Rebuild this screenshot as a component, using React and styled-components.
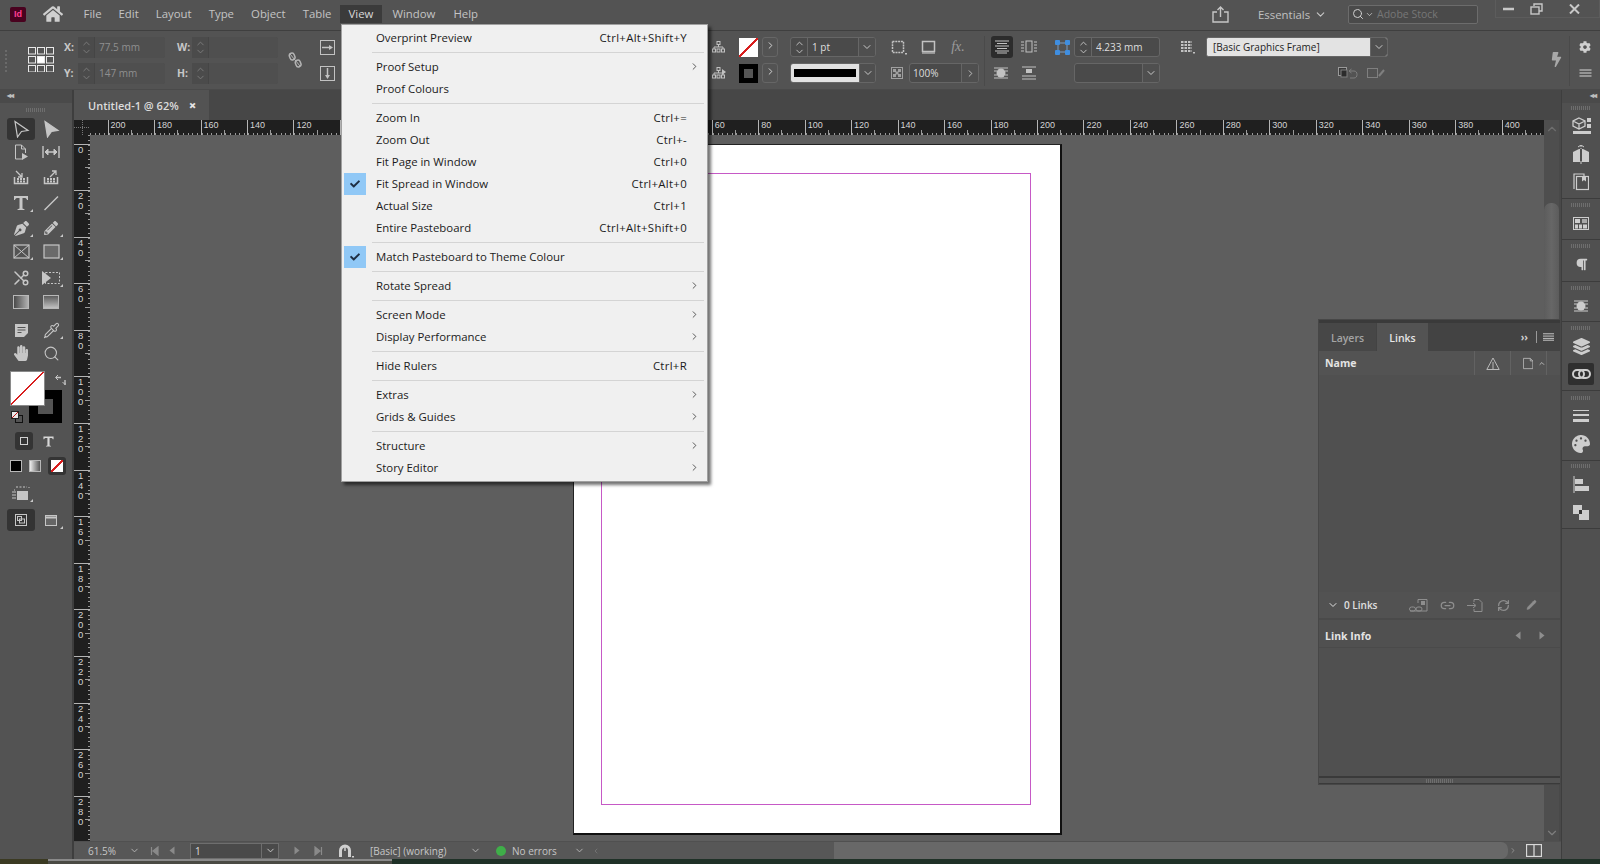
import React from "react";
import styled, { createGlobalStyle } from "styled-components";
import {
  FaHome, FaPenNib, FaPencilAlt, FaHandPaper, FaPalette, FaParagraph, FaCog,
  FaLayerGroup, FaBolt, FaCheck,
} from "react-icons/fa";
import { Pipette, Search, Scissors, ChevronDown, ChevronRight, ChevronUp, Link2, RefreshCw, Pencil } from "lucide-react";

const Global = createGlobalStyle`
  html, body { margin: 0; padding: 0; background: #535353; overflow: hidden; }
  #root { width: 1600px; height: 864px; }
  * { box-sizing: border-box; }
  body { font-family: "Open Sans", "Liberation Sans", sans-serif; }
`;

const SV = ({ w = 16, h = 16, vb = "0 0 16 16", children }) => (
  <svg width={w} height={h} viewBox={vb} fill="none" stroke="currentColor" strokeWidth="1">
    {children}
  </svg>
);

const RefGrid = () => (
  <SV w={26} h={25} vb="0 0 26 25">
    {[0, 9, 18].map((y) =>
      [0, 9, 18].map((x) => (
        <rect key={x + "-" + y} x={x + 0.5} y={y + 0.5} width="7" height="6.5" fill={x === 9 && y === 9 ? "#fff" : "none"} />
      ))
    )}
  </SV>
);
const Arrow = ({ solid }) => (
  <SV w={18} h={18} vb="0 0 18 18">
    <path d="M3 1.5 L16 10.5 L9.5 11.5 L5.5 17 Z" fill={solid ? "currentColor" : "none"} strokeWidth="1.2" />
  </SV>
);
const PageTool = () => (
  <SV>
    <path d="M2.5 1v14h7M2.5 1h6l4 4v4M8.5 1v4h4" />
    <path d="M9 9l6 3.5L9 16z" fill="currentColor" stroke="none" />
  </SV>
);
const GapTool = () => (
  <SV w={18} vb="0 0 18 16">
    <path d="M1 2v12M17 2v12M3 8h12" strokeWidth="1.4" />
    <path d="M3 8l3-3v6zM15 8l-3-3v6z" fill="currentColor" />
  </SV>
);
const Collector = ({ up }) => (
  <SV>
    <path d="M1.5 8v6.5h13V8" strokeWidth="1.5" />
    <path d="M4 10h8M4 12.5h8" stroke="currentColor" strokeWidth="2" strokeDasharray="2 1" />
    <path d={up ? "M7 8l6-6M9 2h4v4" : "M9 8L3 2M5 8h4V4"} strokeWidth="1.3" />
  </SV>
);
const TypeT = ({ s = 18 }) => (
  <SV w={s} h={s} vb="0 0 18 18">
    <path d="M2 2h14v4h-1c-.4-1.5-1-2-3-2h-1.500v10.500l2 .7V16H5.500v-.8l2-.7V4H6c-2 0-2.600.5-3 2H2z" fill="currentColor" stroke="none" />
  </SV>
);
const LineTool = () => (
  <SV><path d="M1.5 15L15 1.5" strokeWidth="1.5" /></SV>
);
const FrameX = () => (
  <SV w={17} h={15} vb="0 0 17 15">
    <rect x="1" y="1" width="15" height="13" strokeWidth="1.2" />
    <path d="M1 1l15 13M16 1L1 14" />
  </SV>
);
const RectTool = () => (
  <SV w={17} h={15} vb="0 0 17 15">
    <rect x="1" y="1" width="15" height="13" fill="#6a6a6a" strokeWidth="1.2" />
  </SV>
);
const FreeTransform = () => (
  <SV w={20} h={16} vb="0 0 20 16">
    <rect x="4.5" y="2.5" width="14" height="11" strokeDasharray="2 1.5" />
    <path d="M1 1l9 7-9 7z" fill="currentColor" stroke="none" />
  </SV>
);
const NoteTool = () => (
  <SV w={15} h={15} vb="0 0 15 15">
    <path d="M1 1h13v9l-4 4H1z" fill="currentColor" stroke="none" />
    <path d="M3.5 4.500h8M3.500 7h8M3.500 9.500h4" stroke="#535353" />
  </SV>
);
const SwapIcon = () => (
  <SV w={11} h={12} vb="0 0 11 12">
    <path d="M1 3.500h5M10 11V6" strokeWidth="1.4" />
    <path d="M3 1L.5 3.500 3 6M7.500 8L10 10.500 12.500 8" />
  </SV>
);
const SmallDefault = () => (
  <SV w={12} h={12} vb="0 0 12 12">
    <rect x="4.5" y="4.5" width="7" height="7" fill="none" stroke="#111" />
    <rect x=".5" y=".5" width="7" height="7" fill="#e8e8e8" stroke="#222" />
    <path d="M1 7l6-6" stroke="#c01818" />
  </SV>
);
const ModePreview = () => (
  <SV w={20} h={15} vb="0 0 20 15">
    <path d="M5 1h11M3 4h1M18 1v1" strokeDasharray="2 1.5" />
    <rect x="6" y="5" width="11" height="9" fill="currentColor" stroke="none" />
    <path d="M1 6h4M1 9h4M1 12h4" />
  </SV>
);
const NormalMode = () => (
  <SV w={12} h={12} vb="0 0 12 12">
    <rect x=".5" y=".5" width="11" height="11" />
    <rect x="2.5" y="2.5" width="4" height="4" />
    <rect x="4.5" y="5" width="5" height="4" />
  </SV>
);
const ScreenMode = () => (
  <SV w={12} h={11} vb="0 0 12 11">
    <rect x=".5" y=".5" width="11" height="10" fill="#666" />
    <path d="M.5 2.500h11" strokeWidth="2" />
  </SV>
);
const BrokenLink = () => (
  <SV w={14} h={16} vb="0 0 14 16">
    <rect x="1.5" y="1" width="5" height="7" rx="2.5" strokeWidth="1.5" transform="rotate(-20 4 4)" />
    <rect x="7.5" y="8" width="5" height="7" rx="2.5" strokeWidth="1.5" transform="rotate(-20 10 11)" />
    <path d="M2 2l10 12" />
  </SV>
);
const SpreadH = () => (
  <SV w={15} h={15} vb="0 0 15 15">
    <rect x=".5" y=".5" width="14" height="14" />
    <path d="M2 7.500h9" strokeWidth="1.5" />
    <path d="M9 5l4 2.500L9 10z" fill="currentColor" stroke="none" />
  </SV>
);
const SpreadV = () => (
  <SV w={15} h={15} vb="0 0 15 15">
    <rect x=".5" y=".5" width="14" height="14" />
    <path d="M7.500 2v9" strokeWidth="1.5" />
    <path d="M5 9l2.500 4L10 9z" fill="currentColor" stroke="none" />
  </SV>
);
const OrgChart = ({ arrow }) => (
  <SV w={14} h={12} vb="0 0 14 12">
    <rect x="5" y=".5" width="3" height="3" />
    <path d="M6.500 3.500V6M2 8V6h9v2" />
    <rect x=".5" y="8" width="3" height="3" />
    <rect x="5" y="8" width="3" height="3" />
    <rect x="9.5" y="8" width="3" height="3" />
    {arrow && <path d="M10 2l4 3-4 3z" fill="currentColor" stroke="none" />}
  </SV>
);
const StrokeBox = () => (
  <SV w={16} h={15} vb="0 0 16 15">
    <rect x="1.5" y="1.5" width="11" height="11" strokeDasharray="2 .8" strokeWidth="1.5" />
    <rect x="14" y="13" width="2" height="1.5" fill="currentColor" stroke="none" />
  </SV>
);
const ShadowBox = () => (
  <SV w={15} h={15} vb="0 0 15 15">
    <rect x="1.5" y="1.5" width="12" height="10" strokeWidth="1.5" />
    <rect x="1" y="12" width="13" height="2" fill="currentColor" stroke="none" opacity=".6" />
  </SV>
);
const Opacity = () => (
  <SV w={12} h={12} vb="0 0 12 12">
    <rect x=".5" y=".5" width="11" height="11" opacity=".7" />
    <rect x="2" y="2" width="3" height="3" fill="currentColor" stroke="none" opacity=".7" />
    <rect x="7" y="2" width="3" height="3" fill="currentColor" stroke="none" opacity=".7" />
    <rect x="4.5" y="4.5" width="3" height="3" fill="currentColor" stroke="none" opacity=".7" />
    <rect x="2" y="7" width="3" height="3" fill="currentColor" stroke="none" opacity=".7" />
    <rect x="7" y="7" width="3" height="3" fill="currentColor" stroke="none" opacity=".7" />
  </SV>
);
const AlignLines = ({ v = 0 }) => (
  <SV w={16} h={14} vb="0 0 16 14">
    {v === 0 && <path d="M1 1h14M3 3.500h10M1 6h14M3 8.500h10M1 11h14M3 13h10" strokeWidth="1.1" />}
    {v === 1 && (
      <>
        <rect x="5" y="1" width="6" height="11" />
        <path d="M0 2h3M0 5h3M0 8h3M0 11h3M13 2h3M13 5h3M13 8h3M13 11h3" />
      </>
    )}
    {v === 2 && (
      <>
        <circle cx="8" cy="7" r="4.5" fill="currentColor" stroke="none" />
        <path d="M1 2h14M1 5h3M12 5h3M1 9h3M12 9h3M1 12h14" />
      </>
    )}
    {v === 3 && (
      <>
        <rect x="5" y="3" width="6" height="4" fill="currentColor" stroke="none" />
        <path d="M1 1h14M1 10h14M1 13h14" />
      </>
    )}
  </SV>
);
const BlueCorners = () => (
  <SV w={15} h={15} vb="0 0 15 15">
    <path d="M3 3h9v9H3z" stroke="#7d9cc0" />
    {[[0, 0], [10, 0], [0, 10], [10, 10]].map(([x, y]) => (
      <rect key={x + "" + y} x={x} y={y} width="5" height="5" rx="1" fill="#3f8ee0" stroke="none" />
    ))}
  </SV>
);
const ObjStyles = () => (
  <SV w={15} h={15} vb="0 0 15 15">
    <path d="M1 2h11M1 5h11M1 8h11M1 11h11" strokeWidth="2" strokeDasharray="2.5 1" />
    <rect x="13" y="12" width="2" height="1.5" fill="currentColor" stroke="none" />
  </SV>
);
const ClearOverride = () => (
  <SV w={20} h={13} vb="0 0 20 13">
    <rect x=".5" y=".5" width="8" height="8" fill="#3a3a3a" stroke="#9a9a9a" />
    <rect x="3" y="3" width="6" height="7" fill="#2c2c2c" />
    <path d="M12 4h4c2 0 3 1.500 3 3.500S18 11 16 11h-4M13.500 2L11 4l2.500 2" />
  </SV>
);
const FrameFit = () => (
  <SV w={18} h={12} vb="0 0 18 12">
    <rect x=".5" y="1.5" width="10" height="9" />
    <path d="M12 9l5-6" strokeWidth="2" />
  </SV>
);
const ShareIcon = () => (
  <SV w={17} h={17} vb="0 0 17 17">
    <path d="M5 6H1v10h15V6h-4" strokeWidth="1.4" />
    <path d="M8.500 11V1M5.500 4l3-3 3 3" strokeWidth="1.4" />
  </SV>
);
const MinIcon = () => (
  <SV w={11} h={4} vb="0 0 11 4"><path d="M0 2h11" strokeWidth="2.5" /></SV>
);
const Restore = () => (
  <SV w={13} h={12} vb="0 0 13 12">
    <path d="M4 3V1h8v7h-3" strokeWidth="1.4" />
    <rect x="1" y="4" width="8" height="7" strokeWidth="1.4" />
  </SV>
);
const CloseIcon = () => (
  <SV w={11} h={10} vb="0 0 11 10"><path d="M1 .5l9 9M10 .5l-9 9" strokeWidth="2" /></SV>
);
const Warn = () => (
  <SV w={14} h={13} vb="0 0 14 13">
    <path d="M7 1L.8 12.500h12.400zM7 5v7" />
  </SV>
);
const DocIcon = () => (
  <SV w={12} h={13} vb="0 0 12 13">
    <path d="M.5.5h8l3 3v9H.5zM8.500.5v3h3" />
  </SV>
);
const Hamburger = ({ w = 12, n = 4 }) => (
  <SV w={w} h={8} vb="0 0 12 8">
    <path d={n === 4 ? "M0 .5h12M0 3h12M0 5.500h12M0 7.500h12" : "M0 1h12M0 4h12M0 7h12"} />
  </SV>
);
const FooterRelink = () => (
  <SV w={19} h={13} vb="0 0 19 13">
    <path d="M9 4V.5h9v11.500H1" />
    <rect x="12" y="2" width="4" height="4" fill="currentColor" stroke="none" />
    <rect x=".5" y="8" width="6" height="4" rx="2" />
    <rect x="7" y="8" width="6" height="4" rx="2" />
  </SV>
);
const GoTo = () => (
  <SV w={16} h={13} vb="0 0 16 13">
    <path d="M7 3V.5h5l3 3v9H7V10" />
    <path d="M0 6.500h8M6 4l3 2.500L6 9" />
  </SV>
);
const FirstLast = ({ last }) => (
  <SV w={9} h={10} vb="0 0 9 10">
    {last ? <path d="M1 1l5 4-5 4zM7.500 1v8" fill="currentColor" strokeWidth="1.2" /> : <path d="M8 1L3 5l5 4zM1.500 1v8" fill="currentColor" strokeWidth="1.2" />}
  </SV>
);
const Tri = ({ dir }) => (
  <SV w={6} h={9} vb="0 0 6 9">
    <path d={dir === "l" ? "M5.500.5v8L.5 4.500z" : "M.5.5v8l5-4z"} fill="currentColor" stroke="none" />
  </SV>
);
const Preflight = () => (
  <SV w={16} h={14} vb="0 0 16 14">
    <path d="M2.500 13V6.500a4.500 4.500 0 0 1 9 0V13" strokeWidth="3" />
    <path d="M7 3v4" strokeWidth="1.5" />
    <rect x="14" y="12" width="2" height="1.5" fill="currentColor" stroke="none" />
  </SV>
);
const SplitView = () => (
  <SV w={16} h={13} vb="0 0 16 13">
    <rect x=".5" y=".5" width="15" height="12" strokeWidth="1.3" />
    <path d="M8 .5v12" strokeWidth="1.3" />
  </SV>
);
const CC3D = () => (
  <SV w={19} h={18} vb="0 0 19 18">
    <path d="M7 1l6 3v5l-6 3-6-3V4zM1 4l6 3 6-3M7 7v5" strokeWidth="1.3" />
    <rect x="15" y="1" width="4" height="4" fill="currentColor" stroke="none" />
    <rect x="15" y="7" width="4" height="4" fill="currentColor" stroke="none" />
    <rect x="1" y="14" width="18" height="3" fill="currentColor" stroke="none" />
  </SV>
);
const BookPages = () => (
  <SV w={18} h={19} vb="0 0 18 19">
    <path d="M9 3L1 7v10h7V3zM9 3l8 4v10h-7V3z" fill="currentColor" stroke="none" />
    <path d="M9 0v2M6 2l3-2 3 2M9 16v3" />
  </SV>
);
const LayersPages = () => (
  <SV w={16} h={18} vb="0 0 16 18">
    <path d="M1 16V1h10v2" strokeWidth="1.2" />
    <rect x="3.5" y="3.5" width="12" height="13" strokeWidth="1.2" />
    <path d="M9 3.500h4v5l-2-1.500-2 1.500z" fill="currentColor" stroke="none" />
  </SV>
);
const GridPanel = () => (
  <SV w={16} h={13} vb="0 0 16 13">
    <rect x=".5" y=".5" width="15" height="12" />
    <rect x="2" y="2" width="5" height="4" fill="currentColor" stroke="none" />
    <rect x="9" y="2" width="5" height="4" fill="currentColor" stroke="none" opacity=".7" />
    <rect x="2" y="7.5" width="3" height="4" fill="currentColor" stroke="none" />
    <rect x="6" y="7.5" width="3" height="4" fill="currentColor" stroke="none" />
    <rect x="10" y="7.5" width="4" height="4" fill="currentColor" stroke="none" />
  </SV>
);
const Strokes = () => (
  <SV w={18} h={14} vb="0 0 18 14">
    <path d="M1 1.500h16" />
    <path d="M1 6h16" strokeWidth="2" />
    <path d="M1 11.500h16" strokeWidth="3" />
  </SV>
);
const Align = () => (
  <SV w={16} h={17} vb="0 0 16 17">
    <path d="M1 0v17" />
    <rect x="2" y="3" width="8" height="5" fill="currentColor" stroke="none" />
    <rect x="2" y="10" width="14" height="5" fill="currentColor" stroke="none" />
  </SV>
);
const Pathfinder = () => (
  <SV w={16} h={15} vb="0 0 16 15">
    <rect x="0" y="0" width="9" height="9" fill="currentColor" stroke="none" />
    <rect x="6" y="5" width="10" height="10" fill="currentColor" stroke="none" />
    <rect x="6" y="5" width="3" height="4" fill="#333" stroke="none" />
  </SV>
);
const ChainIcon = () => (
  <SV w={19} h={10} vb="0 0 19 10">
    <rect x="1" y="1" width="11" height="8" rx="4" strokeWidth="2" />
    <rect x="7" y="1" width="11" height="8" rx="4" strokeWidth="2" />
  </SV>
);

const App = styled.div`
  position: relative;
  width: 1600px;
  height: 864px;
  display: flex;
  flex-direction: column;
  background: #535353;
  overflow: hidden;
  font-size: 11px;
  color: #c8c8c8;
`;

const MenuBar = styled.div`
  height: 31px;
  flex: none;
  display: flex;
  align-items: center;
  padding: 0 0 2px 10px;
  border-bottom: 1px solid #3f3f3f;
`;
const IdLogo = styled.div`
  width: 16px;
  height: 15px;
  background: #49021f;
  border-radius: 2px;
  color: #ff3f94;
  font: 700 9px/15px "Liberation Sans", sans-serif;
  text-align: center;
`;
const HomeBtn = styled.div`
  margin: 0 12px 0 17px;
  color: #cfcfcf;
  display: flex;
`;
const MenuItem = styled.div`
  padding: 0 8.5px;
  margin-left: ${(p) => p.$ml || 0}px;
  height: 18px;
  line-height: 18px;
  font-size: 11.4px;
  color: ${(p) => (p.$open ? "#d8d8d8" : "#c4c4c4")};
  background: ${(p) => (p.$open ? "#3b3b3b" : "transparent")};
`;
const Share = styled.div`
  margin-left: auto;
  display: flex;
  color: #c6c6c6;
  padding-right: 29px;
`;
const Workspace = styled.div`
  font-size: 11.4px;
  color: #c0c0c0;
  width: 50px;
`;
const WsChevron = styled.div`
  display: flex;
  width: 34px;
  margin-left: 6px;
  color: #c8c8c8;
`;
const StockSearch = styled.div`
  width: 130px;
  height: 19px;
  border: 1px solid #6c6c6c;
  border-radius: 2px;
  background: #4a4a4a;
  display: flex;
  align-items: center;
  gap: 1px;
  padding-left: 3px;
  color: #cfcfcf;
  font-size: 10.5px;
  margin-right: 17px;
  span { color: #777; margin-left: 2px; }
`;
const WinButtons = styled.div`
  width: 105px;
  height: 18px;
  align-self: flex-start;
  display: grid;
  grid-template-columns: 24px 32px 44px;
  place-items: center;
  color: #c8c8c8;
  border: 1px solid #5c5c5c;
  border-top: none;
`;

const ControlBar = styled.div`
  height: 59px;
  flex: none;
  display: flex;
  padding-top: 6px;
  position: relative;
  border-bottom: 1px solid #4a4a4a;
`;
const Col = styled.div`
  flex: none;
  width: ${(p) => p.$w}px;
  margin-left: ${(p) => p.$ml || 0}px;
  display: flex;
  flex-direction: column;
  gap: 6px;
`;
const Row = styled.div`
  height: ${(p) => p.$h || 20}px;
  display: flex;
  align-items: center;
  justify-content: ${(p) => p.$j || "flex-start"};
  gap: ${(p) => p.$gap || 0}px;
  padding-right: ${(p) => p.$pr || 0}px;
  color: ${(p) => p.$c || "#c2c2c2"};
`;
const BarGrip = styled.div`
  width: 2px;
  margin: 13px 0 0 5px;
  height: 22px;
  border-left: 2px dotted #6a6a6a;
`;
const RefBox = styled.div`
  margin: 10px 0 0 21px;
  color: #e8e8e8;
`;
const AxisLabel = styled.div`
  font-weight: 700;
  font-size: 10.5px;
  color: #c8c8c8;
`;
const DimField = styled.div`
  width: 100%;
  height: 21px;
  display: flex;
  align-items: center;
  background: #4f4f4f;
  border-radius: 2px;
  color: #8f8f8f;
  font-size: 10px;
`;
const Spin = styled.div`
  width: 17px;
  height: 100%;
  flex: none;
  display: flex;
  flex-direction: column;
  align-items: center;
  justify-content: center;
  background: ${(p) => p.$bg || "transparent"};
  border-right: 1px solid ${(p) => p.$line || "#454545"};
  color: ${(p) => p.$c || "#7d7d7d"};
  margin-right: 4px;
  svg { margin: -1.5px 0; }
`;
const BoxField = styled.div`
  width: ${(p) => p.$w}px;
  height: 20px;
  flex: none;
  display: flex;
  align-items: center;
  border: 1px solid #666;
  border-radius: 3px;
  background: ${(p) => p.$bg || "#4a4a4a"};
  font-size: 10px;
  color: #dedede;
  overflow: hidden;
`;
const Val = styled.div`
  flex: 1;
  padding-left: ${(p) => p.$pl || 0}px;
  white-space: nowrap;
`;
const Drop = styled.div`
  width: 17px;
  height: 100%;
  flex: none;
  display: flex;
  align-items: center;
  justify-content: center;
  border-left: 1px solid #666;
  background: #4f4f4f;
  color: #c8c8c8;
`;
const NoneSwatch = styled.div`
  width: 19px;
  height: 19px;
  background: linear-gradient(to bottom right, #fff 47%, #d81e1e 47% 55%, #fff 55%);
`;
const StrokeSwatch = styled.div`
  width: 19px;
  height: 19px;
  background: #000;
  display: flex;
  align-items: center;
  justify-content: center;
  &::after { content: ""; width: 9px; height: 9px; background: #555; }
`;
const StrokePreview = styled.div`
  width: 68px;
  height: 100%;
  flex: none;
  background: #e2e2e2;
  display: flex;
  align-items: center;
  padding: 0 3px;
  &::after { content: ""; flex: 1; height: 8px; background: #000; }
`;
const PressedBtn = styled.div`
  width: 22px;
  height: 22px;
  margin: -2px 0;
  flex: none;
  background: #2c2c2c;
  border-radius: 3px;
  display: flex;
  align-items: center;
  justify-content: center;
`;
const VLine = styled.div`
  width: 1px;
  height: 50px;
  margin: -1px 0 0 ${(p) => p.$ml}px;
  background: #4a4a4a;
  flex: none;
`;
const PlainIcon = styled.div`
  width: ${(p) => p.$w}px;
  display: flex;
  justify-content: center;
  flex: none;
`;
const FrameInput = styled.div`
  flex: 1;
  height: 100%;
  background: #e3e3e3;
  color: #222;
  font-size: 10px;
  line-height: 18px;
  padding-left: 6px;
`;
const Fx = styled.span`
  font: italic 14px "Liberation Serif", serif;
  color: #9b9b9b;
`;
const BoltUp = styled.div`
  display: flex;
  margin-top: -28px;
`;

const Body = styled.div`
  flex: 1;
  display: flex;
  min-height: 0;
`;

const ToolBar = styled.div`
  width: 72px;
  flex: none;
  display: flex;
  flex-direction: column;
`;
const Collapse = styled.div`
  height: 13px;
  flex: none;
  background: #4a4a4a;
  color: #bdbdbd;
  font: 700 8px/12px "Liberation Sans", sans-serif;
  letter-spacing: -1px;
  padding: 0 ${(p) => (p.$right ? "4px" : 0)} 0 ${(p) => (p.$right ? 0 : "7px")};
  text-align: ${(p) => (p.$right ? "right" : "left")};
`;
const Grip = styled.div`
  height: 4px;
  width: ${(p) => p.$w || 20}px;
  margin: ${(p) => p.$mt ?? 5}px auto 0;
  background: repeating-linear-gradient(to right, #6e6e6e 0 1px, transparent 1px 2px);
  flex: none;
`;
const ToolSpacer = styled.div`
  height: 6px;
  flex: none;
`;
const ToolRow = styled.div`
  display: flex;
  gap: 2px;
  padding-left: 7px;
  margin-top: ${(p) => p.$mt}px;
`;
const Tool = styled.div`
  position: relative;
  width: 28px;
  height: 22px;
  display: flex;
  align-items: center;
  justify-content: center;
  color: #c6c6c6;
  border-radius: 3px;
  background: ${(p) => (p.$active ? "#343434" : "transparent")};
  ${(p) =>
    p.$corner &&
    `&::after {
      content: "";
      position: absolute;
      right: 2px;
      bottom: 2px;
      border-left: 3px solid transparent;
      border-bottom: 3px solid #c8c8c8;
    }`}
`;
const FlipX = styled.div`
  display: flex;
  transform: scaleX(-1);
`;
const GradBox = styled.div`
  width: 16px;
  height: 14px;
  border: 1px solid #b8b8b8;
  background: linear-gradient(to right, #4a4a4a, #b0b0b0);
`;
const FeatherBox = styled.div`
  width: 16px;
  height: 14px;
  border: 1px solid #b8b8b8;
  background: linear-gradient(to bottom, #5d5d5d, #c0c0c0);
`;
const FillStroke = styled.div`
  position: relative;
  height: 54px;
  flex: none;
  margin-top: 7px;
`;
const BigFill = styled.div`
  position: absolute;
  left: 10px;
  top: 0;
  width: 35px;
  height: 35px;
  z-index: 1;
  background: linear-gradient(to bottom right, #fff 48%, #d81e1e 48% 51%, #fff 51%);
  border: 1px solid #8a8a8a;
`;
const BigStroke = styled.div`
  position: absolute;
  left: 29px;
  top: 19px;
  width: 33px;
  height: 33px;
  border: 9px solid #000;
  background: #535353;
`;
const SwapPos = styled.div`
  position: absolute;
  left: 55px;
  top: 3px;
  color: #c4c4c4;
  display: flex;
`;
const DefaultPos = styled.div`
  position: absolute;
  left: 11px;
  top: 40px;
  display: flex;
`;
const FormatRow = styled.div`
  display: flex;
  align-items: center;
  margin: ${(p) => p.$mt}px 0 0 ${(p) => p.$ml}px;
  gap: ${(p) => p.$gap}px;
`;
const SmallBtn = styled.div`
  width: 18px;
  height: 18px;
  display: flex;
  align-items: center;
  justify-content: center;
  color: #d8d8d8;
  border-radius: 3px;
  background: ${(p) => (p.$active ? "#343434" : "transparent")};
`;
const Outline = styled.div`
  width: 8px;
  height: 8px;
  border: 1px solid #d0d0d0;
`;
const ApplySwatch = styled.div`
  width: 12px;
  height: 12px;
  border: 1px solid #b8b8b8;
  background: ${(p) => p.$bg};
`;
const NoneSwatchSmall = styled.div`
  width: 12px;
  height: 12px;
  background: linear-gradient(to bottom right, #fff 44%, #d81e1e 44% 56%, #fff 56%);
`;

const DocArea = styled.div`
  flex: 1;
  min-width: 0;
  display: flex;
  flex-direction: column;
  border-left: 2px solid #3e3e3e;
`;
const TabRow = styled.div`
  height: 30px;
  flex: none;
  background: #474747;
`;
const DocTab = styled.div`
  width: 135px;
  height: 100%;
  background: #535353;
  display: flex;
  align-items: center;
  padding: 0 0 0 14px;
  gap: 10px;
  font-size: 11px;
  font-weight: 600;
  color: #dcdcdc;
  b { font-size: 13px; color: #e4e4e4; }
`;
const DocMid = styled.div`
  flex: 1;
  display: flex;
  min-height: 0;
`;
const DocLeft = styled.div`
  flex: 1;
  min-width: 0;
  display: flex;
  flex-direction: column;
`;
const HRulerRow = styled.div`
  height: 15px;
  flex: none;
  display: flex;
  background: #1f1f1f;
`;
const RulerCorner = styled.div`
  width: 16px;
  flex: none;
  background:
    repeating-linear-gradient(to right, #777 0 1px, transparent 1px 2px) 0 7px / 100% 1px no-repeat,
    repeating-linear-gradient(to bottom, #777 0 1px, transparent 1px 2px) 8px 0 / 1px 100% no-repeat,
    #1f1f1f;
`;
const HRuler = styled.div`
  flex: 1;
  min-width: 0;
  display: flex;
  overflow: hidden;
`;
const HSeg = styled.div`
  flex: none;
  width: ${(p) => p.$w}px;
  height: 15px;
  border-left: ${(p) => (p.$lead ? "none" : "1px solid #b4b4b4")};
  padding-left: 2px;
  font: 9px/11px "Liberation Sans", sans-serif;
  color: #d4d4d4;
  background:
    repeating-linear-gradient(to right, #9a9a9a 0 1px, transparent 1px 4.647px) 0 100% / 100% 2px no-repeat,
    linear-gradient(#9a9a9a, #9a9a9a) 22.2px 100% / 1px 5px no-repeat;
`;
const CanvasRow = styled.div`
  flex: 1;
  min-height: 0;
  display: flex;
`;
const VRuler = styled.div`
  width: 16px;
  flex: none;
  background: #1f1f1f;
  overflow: hidden;
`;
const VSeg = styled.div`
  width: 100%;
  height: ${(p) => p.$h}px;
  border-top: ${(p) => (p.$lead ? "none" : "1px solid #b4b4b4")};
  padding: 0 0 0 4px;
  font: 9.5px/10px "Liberation Sans", sans-serif;
  color: #d4d4d4;
  background:
    repeating-linear-gradient(to bottom, #9a9a9a 0 1px, transparent 1px 4.66px) 100% 0 / 2px 100% no-repeat,
    linear-gradient(#9a9a9a, #9a9a9a) 100% 22.3px / 5px 1px no-repeat;
`;
const Pasteboard = styled.div`
  flex: 1;
  min-width: 0;
  background: #5e5e5e;
  padding: 9px 0 0 482.6px;
`;
const Page = styled.div`
  width: 489px;
  height: 691px;
  background: #fff;
  border: 1px solid #222;
  border-right: 2px solid #111;
  border-bottom: 2px solid #111;
  padding: 28px 29px 28px 27px;
`;
const Guide = styled.div`
  height: 100%;
  border: 1px solid #c659c6;
`;
const VScroll = styled.div`
  width: 17px;
  flex: none;
  background: #4e4e4e;
  display: flex;
  flex-direction: column;
  padding-top: 2px;
  color: #6e6e6e;
  border-right: 2px solid #494949;
  align-items: center;
`;
const VThumb = styled.div`
  width: 15px;
  height: 500px;
  margin-top: 67px;
  border-radius: 7px 7px 0 0;
  background: linear-gradient(to right, #5c5c5c, #676767 50%, #5c5c5c);
`;
const ScrollEnd = styled.div`
  margin-top: auto;
  display: flex;
  padding-bottom: 1px;
  color: #7e7e7e;
`;
const StatusBar = styled.div`
  height: 18px;
  flex: none;
  display: flex;
  align-items: center;
  background: #575757;
  border-top: 1px solid #505050;
  font-size: 10px;
  color: #c6c6c6;
`;
const StatusText = styled.div`
  width: ${(p) => p.$w}px;
  margin-left: ${(p) => p.$ml}px;
  flex: none;
  white-space: nowrap;
`;
const StatusIcon = styled.div`
  width: ${(p) => p.$w}px;
  margin-left: ${(p) => p.$ml || 0}px;
  flex: none;
  display: flex;
  justify-content: center;
  color: ${(p) => p.$c || "#b8b8b8"};
`;
const PageField = styled.div`
  width: 89px;
  height: 16px;
  margin-left: ${(p) => p.$ml}px;
  flex: none;
  display: flex;
  align-items: center;
  border: 1px solid #6e6e6e;
  background: #4a4a4a;
  color: #dedede;
  padding-left: 4px;
`;
const PageDrop = styled.div`
  margin-left: auto;
  width: 17px;
  height: 100%;
  display: flex;
  align-items: center;
  justify-content: center;
  border-left: 1px solid #6e6e6e;
  color: #cfcfcf;
`;
const GreenDot = styled.div`
  width: 10px;
  height: 10px;
  border-radius: 50%;
  background: #3fae49;
  margin-left: ${(p) => p.$ml}px;
  flex: none;
`;
const HThumb = styled.div`
  width: 674px;
  height: 100%;
  margin-left: ${(p) => p.$ml}px;
  flex: none;
  background: #686868;
  border-radius: 0 7px 7px 0;
`;

const Dock = styled.div`
  width: 39px;
  flex: none;
  display: flex;
  flex-direction: column;
  background: #505050;
  border-left: 1px solid #3e3e3e;
`;
const DockGroup = styled.div`
  height: ${(p) => p.$h}px;
  flex: none;
  border-bottom: 1px solid #3c3c3c;
  padding-top: 3px;
  display: flex;
  flex-direction: column;
  align-items: center;
`;
const DockCells = styled.div`
  margin-top: 2px;
  display: flex;
  flex-direction: column;
  align-items: center;
`;
const DockCell = styled.div`
  width: 26px;
  height: ${(p) => (p.$active ? 22 : 28)}px;
  margin: ${(p) => (p.$active ? "3px 0" : 0)};
  display: flex;
  align-items: center;
  justify-content: center;
  color: #cdcdcd;
  border-radius: 2px;
  background: ${(p) => (p.$active ? "#2f2f2f" : "transparent")};
`;

const Strip = styled.div`
  height: 5px;
  flex: none;
  display: flex;
`;
const StripPart = styled.div`
  width: ${(p) => p.$w}px;
  flex: ${(p) => (p.$w ? "none" : 1)};
  background: ${(p) => p.$bg};
  border-top: ${(p) => (p.$line ? "2px solid #8a8a8a" : "none")};
`;

const ViewMenu = styled.div`
  position: absolute;
  left: 341px;
  top: 24px;
  width: 367px;
  height: 458px;
  padding: 2px 0;
  background: #f0f0f0;
  border: 1px solid #a0a0a0;
  box-shadow: 3px 3px 3px rgba(0, 0, 0, 0.55);
  color: #1b1b1b;
  font-size: 11.4px;
  z-index: 5;
`;
const MenuRow = styled.div`
  height: 22px;
  display: flex;
  align-items: center;
  padding: 0 0 2px 2px;
`;
const CheckCell = styled.div`
  width: 22px;
  height: 22px;
  margin-bottom: -2px;
  flex: none;
  display: flex;
  align-items: center;
  justify-content: center;
  background: ${(p) => (p.$on ? "#90c8f6" : "transparent")};
  color: #1f2f44;
`;
const MenuLabel = styled.div`
  margin-left: 10px;
  flex: 1;
  white-space: nowrap;
`;
const Shortcut = styled.div`
  white-space: nowrap;
  letter-spacing: 0.3px;
`;
const SubCell = styled.div`
  width: 20px;
  flex: none;
  padding-left: 2px;
  display: flex;
  color: #222;
`;
const MenuSep = styled.div`
  height: 7px;
  margin: 0 3px 0 30px;
  display: flex;
  align-items: center;
  &::after { content: ""; flex: 1; height: 1px; background: #d4d4d4; }
`;

const LinksPanel = styled.div`
  position: absolute;
  left: 1319px;
  top: 320px;
  width: 241px;
  height: 464px;
  display: flex;
  flex-direction: column;
  background: #505050;
  box-shadow: 0 0 0 1px #474747;
  z-index: 3;
`;
const PanelTabs = styled.div`
  height: 31px;
  flex: none;
  display: flex;
  align-items: stretch;
  background: #434343;
  border-top: 3px solid #3a3a3a;
`;
const PanelTab = styled.div`
  width: ${(p) => p.$w}px;
  margin-left: ${(p) => p.$ml || 0}px;
  padding-top: 1px;
  display: flex;
  align-items: center;
  justify-content: center;
  font-size: 10.5px;
  font-weight: 600;
  background: ${(p) => (p.$on ? "#535353" : "#474747")};
  color: ${(p) => (p.$on ? "#e6e6e6" : "#a4a4a4")};
`;
const PanelTools = styled.div`
  margin-left: auto;
  display: flex;
  align-items: center;
  padding-right: 6px;
  color: #d0d0d0;
  font-size: 10px;
  font-weight: 700;
  gap: 8px;
  i { width: 1px; height: 12px; background: #999; margin-right: -2px; }
`;
const NameRow = styled.div`
  height: 24px;
  flex: none;
  display: flex;
  align-items: center;
  background: #535353;
  padding-left: 6px;
  font-weight: 700;
  font-size: 10.5px;
  color: #e4e4e4;
`;
const NameHead = styled.div`
  width: 149px;
  flex: none;
`;
const NameCell = styled.div`
  width: ${(p) => p.$w}px;
  height: 100%;
  flex: none;
  display: flex;
  align-items: center;
  gap: 5px;
  padding-left: ${(p) => p.$pl}px;
  border-left: 1px solid #626262;
  color: #b9b9b9;
`;
const ListArea = styled.div`
  height: 217px;
  flex: none;
`;
const LinksFooter = styled.div`
  height: 28px;
  flex: none;
  display: flex;
  align-items: center;
  padding-left: 8px;
  background: #525252;
  border-bottom: 2px solid #4a4a4a;
  font-size: 10px;
  font-weight: 600;
  color: #e0e0e0;
`;
const FootIcon = styled.div`
  width: ${(p) => p.$w}px;
  margin-left: ${(p) => p.$ml}px;
  flex: none;
  display: flex;
  justify-content: center;
  color: #8e8e8e;
`;
const InfoRow = styled.div`
  height: 28px;
  flex: none;
  display: flex;
  align-items: center;
  padding: 4px 0 0 6px;
  border-bottom: 1px solid #4a4a4a;
  font-size: 10.5px;
  font-weight: 700;
  color: #e4e4e4;
`;
const InfoArrows = styled.div`
  margin-left: auto;
  display: flex;
  gap: 18px;
  padding-right: 15px;
  color: #8e8e8e;
`;
const PanelFoot = styled.div`
  margin-top: auto;
  height: 8px;
  flex: none;
  background: #535353;
  border-top: 2px solid #3a3a3a;
  border-bottom: 1px solid #3a3a3a;
  display: flex;
  justify-content: center;
  align-items: center;
`;

const MENU = [
  [{ t: "Overprint Preview", k: "Ctrl+Alt+Shift+Y" }],
  [{ t: "Proof Setup", sub: 1 }, { t: "Proof Colours" }],
  [
    { t: "Zoom In", k: "Ctrl+=" },
    { t: "Zoom Out", k: "Ctrl+-" },
    { t: "Fit Page in Window", k: "Ctrl+0" },
    { t: "Fit Spread in Window", k: "Ctrl+Alt+0", on: 1 },
    { t: "Actual Size", k: "Ctrl+1" },
    { t: "Entire Pasteboard", k: "Ctrl+Alt+Shift+0" },
  ],
  [{ t: "Match Pasteboard to Theme Colour", on: 1 }],
  [{ t: "Rotate Spread", sub: 1 }],
  [{ t: "Screen Mode", sub: 1 }, { t: "Display Performance", sub: 1 }],
  [{ t: "Hide Rulers", k: "Ctrl+R" }],
  [{ t: "Extras", sub: 1 }, { t: "Grids & Guides", sub: 1 }],
  [{ t: "Structure", sub: 1 }, { t: "Story Editor", sub: 1 }],
];

// the labels from index 5 to 12 sit behind the open menu
const H_LABELS = [200, 180, 160, 140, 120, "", "", "", "", "", "", "", "", 60, 80, 100, 120, 140, 160, 180, 200, 220, 240, 260, 280, 300, 320, 340, 360, 380, 400];
const V_LABELS = [0, 20, 40, 60, 80, 100, 120, 140, 160, 180, 200, 220, 240, 260, 280];

const Dn = (p) => <ChevronDown size={p.s || 12} strokeWidth={p.w || 2} />;
const Up = (p) => <ChevronUp size={p.s || 12} strokeWidth={p.w || 2} />;

function ViewDropdown() {
  return (
    <ViewMenu>
      {MENU.map((group, i) => (
        <React.Fragment key={i}>
          {i > 0 && <MenuSep />}
          {group.map((m) => (
            <MenuRow key={m.t}>
              <CheckCell $on={m.on}>{m.on && <FaCheck size={10} />}</CheckCell>
              <MenuLabel>{m.t}</MenuLabel>
              {m.k && <Shortcut>{m.k}</Shortcut>}
              <SubCell>{m.sub && <ChevronRight size={11} strokeWidth={1.6} />}</SubCell>
            </MenuRow>
          ))}
        </React.Fragment>
      ))}
    </ViewMenu>
  );
}

function Controls() {
  return (
    <ControlBar>
      <BarGrip />
      <RefBox><RefGrid /></RefBox>
      <Col $w={14} $ml={10}>
        <Row><AxisLabel>X:</AxisLabel></Row>
        <Row><AxisLabel>Y:</AxisLabel></Row>
      </Col>
      <Col $w={87}>
        <Row><DimField><Spin $bg="#4b4b4b"><Up s={11} /><Dn s={11} /></Spin>77.5 mm</DimField></Row>
        <Row><DimField><Spin $bg="#4b4b4b"><Up s={11} /><Dn s={11} /></Spin>147 mm</DimField></Row>
      </Col>
      <Col $w={15} $ml={12}>
        <Row><AxisLabel>W:</AxisLabel></Row>
        <Row><AxisLabel>H:</AxisLabel></Row>
      </Col>
      <Col $w={86}>
        <Row><DimField><Spin $bg="#4b4b4b"><Up s={11} /><Dn s={11} /></Spin></DimField></Row>
        <Row><DimField><Spin $bg="#4b4b4b"><Up s={11} /><Dn s={11} /></Spin></DimField></Row>
      </Col>
      <Col $w={14} $ml={10}>
        <Row $h={46} $j="center" $c="#b4b4b4"><BrokenLink /></Row>
      </Col>
      <Col $w={15} $ml={18}>
        <Row><SpreadH /></Row>
        <Row><SpreadV /></Row>
      </Col>
      <Col $w={14} $ml={377}>
        <Row><OrgChart /></Row>
        <Row><OrgChart arrow /></Row>
      </Col>
      <Col $w={19} $ml={13}>
        <Row><NoneSwatch /></Row>
        <Row><StrokeSwatch /></Row>
      </Col>
      <Col $w={16} $ml={4}>
        <Row><BoxField $w={16} $bg="#535353"><Val $pl={2}><ChevronRight size={11} strokeWidth={2} /></Val></BoxField></Row>
        <Row><BoxField $w={16} $bg="#535353"><Val $pl={2}><ChevronRight size={11} strokeWidth={2} /></Val></BoxField></Row>
      </Col>
      <Col $w={86} $ml={12}>
        <Row>
          <BoxField $w={86}>
            <Spin $line="#666" $c="#c8c8c8"><Up s={11} /><Dn s={11} /></Spin>
            <Val>1 pt</Val>
            <Drop><Dn s={12} /></Drop>
          </BoxField>
        </Row>
        <Row>
          <BoxField $w={86}>
            <StrokePreview />
            <Drop><Dn s={12} /></Drop>
          </BoxField>
        </Row>
      </Col>
      <Col $w={88} $ml={15}>
        <Row $gap={14}>
          <PlainIcon $w={16}><StrokeBox /></PlainIcon>
          <PlainIcon $w={15}><ShadowBox /></PlainIcon>
          <PlainIcon $w={16}><Fx>fx.</Fx></PlainIcon>
        </Row>
        <Row $gap={6}>
          <PlainIcon $w={12}><Opacity /></PlainIcon>
          <BoxField $w={70}>
            <Val $pl={3}>100%</Val>
            <Drop><ChevronRight size={11} strokeWidth={2} /></Drop>
          </BoxField>
        </Row>
      </Col>
      <VLine $ml={5} />
      <Col $w={46} $ml={6}>
        <Row $gap={8}>
          <PressedBtn><AlignLines /></PressedBtn>
          <PlainIcon $w={16}><AlignLines v={1} /></PlainIcon>
        </Row>
        <Row $gap={10}>
          <PlainIcon $w={20}><AlignLines v={2} /></PlainIcon>
          <PlainIcon $w={16}><AlignLines v={3} /></PlainIcon>
        </Row>
      </Col>
      <Col $w={15} $ml={18}>
        <Row><BlueCorners /></Row>
        <Row />
      </Col>
      <Col $w={86} $ml={4}>
        <Row>
          <BoxField $w={86}>
            <Spin $line="#666" $c="#c8c8c8"><Up s={11} /><Dn s={11} /></Spin>
            <Val>4.233 mm</Val>
          </BoxField>
        </Row>
        <Row>
          <BoxField $w={86}>
            <Val />
            <Drop><Dn s={12} /></Drop>
          </BoxField>
        </Row>
      </Col>
      <Col $w={15} $ml={20}>
        <Row><ObjStyles /></Row>
        <Row />
      </Col>
      <Col $w={182} $ml={11}>
        <Row>
          <BoxField $w={182} $bg="#e3e3e3">
            <FrameInput>[Basic Graphics Frame]</FrameInput>
            <Drop><Dn s={12} /></Drop>
          </BoxField>
        </Row>
        <Row $gap={9} $j="flex-end" $pr={3} $c="#7f7f7f">
          <ClearOverride />
          <FrameFit />
        </Row>
      </Col>
      <Col $w={10} $ml={163}>
        <Row />
        <Row $c="#a8a8a8" $j="center"><BoltUp><FaBolt size={15} /></BoltUp></Row>
      </Col>
      <VLine $ml={8} />
      <Col $w={14} $ml={9}>
        <Row $c="#cfcfcf"><FaCog size={12} /></Row>
        <Row $c="#d8d8d8"><Hamburger w={13} n={3} /></Row>
      </Col>
    </ControlBar>
  );
}

function Toolbar() {
  const rows = [
    [<Arrow key="a" />, <Arrow key="b" solid />, { active: true }],
    [<PageTool key="a" />, <GapTool key="b" />],
    [<Collector key="a" />, <Collector key="b" up />],
    [<TypeT key="a" />, <LineTool key="b" />, { c0: 1 }],
    [<FaPenNib key="a" size={15} />, <FaPencilAlt key="b" size={14} />, { c0: 1, c1: 1 }],
    [<FrameX key="a" />, <RectTool key="b" />, { c0: 1, c1: 1 }],
    [<FlipX key="a"><Scissors size={18} strokeWidth={2} /></FlipX>, <FreeTransform key="b" />, { c1: 1 }],
    [<GradBox key="a" />, <FeatherBox key="b" />],
    [<NoteTool key="a" />, <Pipette key="b" size={17} strokeWidth={1.5} />, { c1: 1 }],
    [<FaHandPaper key="a" size={16} />, <Search key="b" size={17} strokeWidth={1.5} />],
  ];
  const gaps = [0, 1, 3, 4, 3, 1, 5, 2, 6, 1];
  return (
    <ToolBar>
      <Collapse>◂◂</Collapse>
      <Grip $w={20} />
      <ToolSpacer />
      {rows.map((r, i) => {
        const o = r[2] || {};
        return (
          <ToolRow key={i} $mt={gaps[i]}>
            <Tool $active={o.active} $corner={o.c0}>{r[0]}</Tool>
            <Tool $corner={o.c1}>{r[1]}</Tool>
          </ToolRow>
        );
      })}
      <FillStroke>
        <BigFill />
        <BigStroke />
        <SwapPos><SwapIcon /></SwapPos>
        <DefaultPos><SmallDefault /></DefaultPos>
      </FillStroke>
      <FormatRow $mt={7} $ml={15} $gap={6}>
        <SmallBtn $active><Outline /></SmallBtn>
        <SmallBtn><TypeT s={13} /></SmallBtn>
      </FormatRow>
      <FormatRow $mt={7} $ml={10} $gap={7}>
        <ApplySwatch $bg="#000" />
        <ApplySwatch $bg="linear-gradient(to right,#eee,#555)" />
        <SmallBtn $active><NoneSwatchSmall /></SmallBtn>
      </FormatRow>
      <ToolRow $mt={7}>
        <Tool $corner><ModePreview /></Tool>
      </ToolRow>
      <ToolRow $mt={5}>
        <Tool $active><NormalMode /></Tool>
        <Tool $corner><ScreenMode /></Tool>
      </ToolRow>
    </ToolBar>
  );
}

function DocumentArea() {
  return (
    <DocArea>
      <TabRow>
        <DocTab>Untitled-1 @ 62% <b>×</b></DocTab>
      </TabRow>
      <DocMid>
        <DocLeft>
          <HRulerRow>
            <RulerCorner />
            <HRuler>
              <HSeg $lead $w={17.6} />
              {H_LABELS.map((n, i) => (
                <HSeg key={i} $w={46.47}>{n}</HSeg>
              ))}
            </HRuler>
          </HRulerRow>
          <CanvasRow>
            <VRuler>
              <VSeg $lead $h={8.5} />
              {V_LABELS.map((n) => (
                <VSeg key={n} $h={46.6}>
                  {String(n).split("").map((d, i) => <div key={i}>{d}</div>)}
                </VSeg>
              ))}
            </VRuler>
            <Pasteboard>
              <Page><Guide /></Page>
            </Pasteboard>
          </CanvasRow>
        </DocLeft>
        <VScroll>
          <Up s={14} />
          <VThumb />
          <ScrollEnd><Dn s={14} /></ScrollEnd>
        </VScroll>
      </DocMid>
      <StatusBar>
        <StatusText $ml={14} $w={38}>61.5%</StatusText>
        <StatusIcon $w={12} $ml={2}><Dn s={11} /></StatusIcon>
        <StatusIcon $w={10} $ml={9} $c="#8a8a8a"><FirstLast /></StatusIcon>
        <StatusIcon $w={6} $ml={10} $c="#8a8a8a"><Tri dir="l" /></StatusIcon>
        <PageField $ml={15}>1<PageDrop><Dn s={11} /></PageDrop></PageField>
        <StatusIcon $w={6} $ml={15} $c="#8a8a8a"><Tri /></StatusIcon>
        <StatusIcon $w={10} $ml={13} $c="#8a8a8a"><FirstLast last /></StatusIcon>
        <StatusIcon $w={16} $ml={15} $c="#d0d0d0"><Preflight /></StatusIcon>
        <StatusText $ml={16} $w={84}>[Basic] (working)</StatusText>
        <StatusIcon $w={12} $ml={15}><Dn s={11} /></StatusIcon>
        <GreenDot $ml={15} />
        <StatusText $ml={6} $w={46}>No errors</StatusText>
        <StatusIcon $w={12} $ml={15}><Dn s={11} /></StatusIcon>
        <StatusIcon $w={8} $ml={7} $c="#7e7e7e"><ChevronRight size={10} style={{ transform: "rotate(180deg)" }} /></StatusIcon>
        <HThumb $ml={234} />
        <StatusIcon $w={8} $ml={1} $c="#a8a8a8"><ChevronRight size={11} strokeWidth={2} /></StatusIcon>
        <StatusIcon $w={16} $ml={9} $c="#d8d8d8"><SplitView /></StatusIcon>
      </StatusBar>
    </DocArea>
  );
}

function RightDock() {
  return (
    <Dock>
      <Collapse $right>◂◂</Collapse>
      <DockGroup $h={96}>
        <Grip $w={20} $mt={0} />
        <DockCells>
          <DockCell><CC3D /></DockCell>
          <DockCell><BookPages /></DockCell>
          <DockCell><LayersPages /></DockCell>
        </DockCells>
      </DockGroup>
      <DockGroup $h={41}>
        <Grip $w={20} $mt={1} />
        <DockCells><DockCell><GridPanel /></DockCell></DockCells>
      </DockGroup>
      <DockGroup $h={42}>
        <Grip $w={20} $mt={1} />
        <DockCells><DockCell><FaParagraph size={13} /></DockCell></DockCells>
      </DockGroup>
      <DockGroup $h={40}>
        <Grip $w={20} $mt={1} />
        <DockCells><DockCell><AlignLines v={2} /></DockCell></DockCells>
      </DockGroup>
      <DockGroup $h={69}>
        <Grip $w={20} $mt={1} />
        <DockCells>
          <DockCell><FaLayerGroup size={17} /></DockCell>
          <DockCell $active><ChainIcon /></DockCell>
        </DockCells>
      </DockGroup>
      <DockGroup $h={70}>
        <Grip $w={20} $mt={2} />
        <DockCells>
          <DockCell><Strokes /></DockCell>
          <DockCell><FaPalette size={18} /></DockCell>
        </DockCells>
      </DockGroup>
      <DockGroup $h={68}>
        <Grip $w={20} $mt={0} />
        <DockCells>
          <DockCell><Align /></DockCell>
          <DockCell><Pathfinder /></DockCell>
        </DockCells>
      </DockGroup>
    </Dock>
  );
}

function Links() {
  return (
    <LinksPanel>
      <PanelTabs>
        <PanelTab $w={57}>Layers</PanelTab>
        <PanelTab $w={51} $ml={1} $on>Links</PanelTab>
        <PanelTools>
          <span>››</span>
          <i />
          <Hamburger w={11} />
        </PanelTools>
      </PanelTabs>
      <NameRow>
        <NameHead>Name</NameHead>
        <NameCell $w={36} $pl={11}><Warn /></NameCell>
        <NameCell $w={36} $pl={12}><DocIcon /><ChevronUp size={9} strokeWidth={3} /></NameCell>
        <NameCell $w={1} $pl={0} />
      </NameRow>
      <ListArea />
      <LinksFooter>
        <Dn s={12} />
        <StatusText $ml={5} $w={65}>0 Links</StatusText>
        <FootIcon $w={19} $ml={0}><FooterRelink /></FootIcon>
        <FootIcon $w={15} $ml={12}><Link2 size={15} strokeWidth={2} /></FootIcon>
        <FootIcon $w={16} $ml={12}><GoTo /></FootIcon>
        <FootIcon $w={13} $ml={14}><RefreshCw size={13} strokeWidth={2.4} /></FootIcon>
        <FootIcon $w={11} $ml={16}><Pencil size={12} fill="currentColor" strokeWidth={1} /></FootIcon>
      </LinksFooter>
      <InfoRow>
        Link Info
        <InfoArrows><Tri dir="l" /><Tri /></InfoArrows>
      </InfoRow>
      <PanelFoot><Grip $w={28} $mt={0} /></PanelFoot>
    </LinksPanel>
  );
}

export default function IndesignWindow() {
  return (
    <App>
      <Global />
      <MenuBar>
        <IdLogo>Id</IdLogo>
        <HomeBtn><FaHome size={20} /></HomeBtn>
        {["File", "Edit", "Layout", "Type", "Object", "Table"].map((m) => (
          <MenuItem key={m}>{m}</MenuItem>
        ))}
        <MenuItem $open>View</MenuItem>
        <MenuItem $ml={2}>Window</MenuItem>
        <MenuItem $ml={1}>Help</MenuItem>
        <Share><ShareIcon /></Share>
        <Workspace>Essentials</Workspace>
        <WsChevron><Dn s={13} /></WsChevron>
        <StockSearch>
          <Search size={12} strokeWidth={2} />
          <Dn s={9} />
          <span>Adobe Stock</span>
        </StockSearch>
        <WinButtons>
          <MinIcon />
          <Restore />
          <CloseIcon />
        </WinButtons>
      </MenuBar>
      <Controls />
      <Body>
        <Toolbar />
        <DocumentArea />
        <RightDock />
      </Body>
      <Strip>
        <StripPart $w={48} $bg="#3b3a22" />
        <StripPart $w={344} $bg="#4a4a44" $line />
        <StripPart $bg="#1f3127" />
      </Strip>
      <ViewDropdown />
      <Links />
    </App>
  );
}
